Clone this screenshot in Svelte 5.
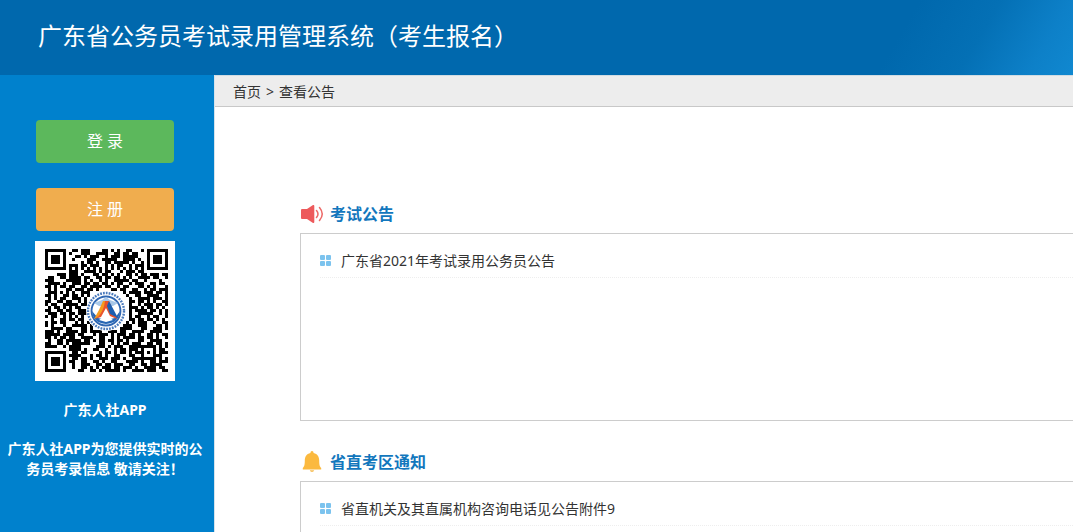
<script>
    const sections = [
        { title: '考试公告', icon: 'horn', items: ['广东省2021年考试录用公务员公告'] },
        { title: '省直考区通知', icon: 'bell', items: ['省直机关及其直属机构咨询电话见公告附件9'] }
    ];

    // one string per row of the code, # is a dark module
    const qrRows = [
        '#######..##.###....##.#.#..##...#.#######',
        '#.....#.#...###..####..##.##.##...#.....#',
        '#.###.#...##.#.###..#.###.#####...#.###.#',
        '#.###.#..#....###..#####..####.#..#.###.#',
        '#.###.#.....#.##.#..##.#####.#..#.#.###.#',
        '#.....#.###.##.###..#.#.##..#.###.#.....#',
        '#######.#.#.#.#.#.#.#.#.#.#.#.#.#.#######',
        '........###..####.#.##...#.###.##........',
        '....###.###.#...##.##.#.#..##.#.##.###.##',
        '.##..##.####.##..##.##.##.#.#..####.##..#',
        '###....#####.#.#..#.#..#####.##..#....#..',
        '.####.#..###.##.##.##.#.##..#.###..##.##.',
        '##.#.##.##..##.####.##..#.##...##.#.#...#',
        '.#.#...##.###.##.#....##.##..##..#.##.###',
        '.###.#.#.#..###...........#.####.###.##.#',
        '##.#..##.##.#.#............#..##..####..#',
        '.#.#.##..###.#..............#..####.###.#',
        '##..##.##..#.#..............##.##.#.#..##',
        '#.##..#####.##..............#..#.###.##.#',
        '.#.##.#.#.##................###.#.##.#.#.',
        '##..##.##..###..............#.####.##.#.#',
        '.###.##.##.###..............#..#####..#.#',
        '#.##..#.#.#.#...............#.##..#.##..#',
        '..#..##.##.##...............##.##.##.#.#.',
        '#.##.##...#.#.#............#.#.###..#..##',
        '#.#...#..#####.#..........###..###...##.#',
        '..####.##...##.#.........####...##..###.#',
        '###.#..####.##.####..###.##..####..####..',
        '#####.####.##...#.###.#.###.##.#..##.#.##',
        '##.#.##.##..####..##..#.#.####.##.##.#..#',
        '.#..##.#####.##.#.##.##.##.#...##..####..',
        '##..##.#.######...##..#.#.##.###..##.##.#',
        '####..#.####.....###.#.###..#########.#.#',
        '........####.#..##..#..#.##.###.#...#.##.',
        '#######..##.##....#.##.#.##.#.###.#.#.###',
        '#.....#.####...#.##.#..##...##..#...###..',
        '#.###.#..##.##.#..###.###.#..########.#.#',
        '#.###.#.##..##..##.#..##...####.#..##.###',
        '#.###.#..#..###..##.##.###..##..##.####..',
        '#.....#..#..##.#.#.###.##.###.#..####.##.',
        '#######....##..##.#.#####.#..####.###..##'
    ];

    const qrPath = qrRows
        .map((row, y) => [...row].map((c, x) => (c === '#' ? `M${x} ${y}h1v1h-1z` : '')).join(''))
        .join('');
</script>

<div class="page">
    <header class="banner">
        <h1>广东省公务员考试录用管理系统（考生报名）</h1>
    </header>

    <div class="body">
        <aside class="sidebar">
            <button class="btn login" type="button">登 录</button>
            <button class="btn register" type="button">注 册</button>

            <svg class="qrcode" viewBox="0 0 140 140" role="img" aria-label="广东人社APP">
                <rect width="140" height="140" fill="#fff" />
                <path transform="translate(10 8) scale(3)" d={qrPath} fill="#000" shape-rendering="crispEdges" />
                <circle cx="71" cy="70" r="20" fill="#fff" />
                <circle cx="71" cy="70" r="18" fill="none" stroke="#4a7abc" stroke-width="2.4" stroke-dasharray="1.8 1.1" />
                <circle cx="71" cy="70" r="14.5" fill="#fff" stroke="#2f67b3" stroke-width="1.8" />
                <path d="M59 62l8-3 4-3 4 3 8 3-5 3-14 0z" fill="#a9c8e8" />
                <path d="M57 70q1 12 14 13q13-1 14-13l-5 7-9 2-8-2z" fill="#2666b4" />
                <path d="M70 60c1 9-3 15-11 18l5-9 4-9z" fill="#f59b1f" />
                <path d="M70 60h4l8 18-7-3-4-8-5 9-6 2c6-4 9-10 10-18z" fill="#e9532d" />
                <path d="M74 60l9 17-8-4-3-8z" fill="#1d5eaf" />
                <path d="M64 79l7-5 7 5-7 2z" fill="#fff" />
            </svg>

            <p>广东人社APP</p>
            <p>广东人社APP为您提供实时的公务员考录信息 敬请关注！</p>
        </aside>

        <main class="content">
            <nav class="crumbs">
                <a href="#home">首页</a>
                <span>&gt;</span>
                <a href="#notice">查看公告</a>
            </nav>

            <div class="notices">
                {#each sections as section}
                    <section>
                        <h2>
                            {#if section.icon === 'horn'}
                                <svg width="24" height="24" viewBox="0 0 24 24">
                                    <path d="M2 7h5l6-4q1.300-.4 1.300 1v16q0 1.400-1.300 1l-6-4H2q-1 0-1-1V8q0-1 1-1z" fill="#ed5a5c" />
                                    <path d="M16.500 8.500q3 3.500 0 7M19.500 5.500q5.500 6.500 0 13" fill="none" stroke="#ed6a68" stroke-width="1.500" stroke-linecap="round" />
                                </svg>
                            {:else}
                                <svg width="24" height="24" viewBox="0 0 24 24">
                                    <path d="M12 1q1.600 0 1.600 2c4 .8 5.600 4 5.600 7.500 0 4.500.6 6 2 7.500v1.500H2.800V18c1.400-1.500 2-3 2-7.500 0-3.500 1.600-6.700 5.600-7.500Q10.400 1 12 1z" fill="#fbb93f" />
                                    <path d="M9.800 20.300h4.400q-.4 1.700-2.200 1.700t-2.200-1.700z" fill="#f6bd55" />
                                </svg>
                            {/if}
                            {section.title}
                        </h2>
                        <ul>
                            {#each section.items as item}
                                <li>
                                    <svg width="11" height="11" viewBox="0 0 11 11" fill="#7cc3ee">
                                        <rect width="5" height="5" rx="1" />
                                        <rect x="6" width="5" height="5" rx="1" />
                                        <rect y="6" width="5" height="5" rx="1" />
                                        <rect x="6" y="6" width="5" height="5" rx="1" />
                                    </svg>
                                    <a href="#detail">{item}</a>
                                </li>
                            {/each}
                        </ul>
                    </section>
                {/each}
            </div>
        </main>
    </div>
</div>

<style>
    :global(body) {
        margin: 0;
    }

    .page {
        display: flex;
        flex-direction: column;
        height: 100vh;
        overflow: hidden;
        font-family: "Noto Sans", "Noto Sans CJK SC", sans-serif;
        font-size: 14px;
        line-height: 20px;
        color: #333;
        background: #fff;
    }

    a {
        color: inherit;
        text-decoration: none;
    }

    .banner {
        flex: none;
        display: flex;
        align-items: center;
        height: 75px;
        padding: 0 38px;
        box-sizing: border-box;
        background: linear-gradient(120deg, #0068ad calc(100% - 170px), #0470b5 calc(100% - 100px), #0d80c8 calc(100% - 40px), #1088d0);
    }

    .banner h1 {
        margin: 0;
        font-size: 24px;
        font-weight: 400;
        line-height: 32px;
        padding-bottom: 4px;
        color: #fff;
        white-space: nowrap;
    }

    .body {
        flex: 1;
        display: flex;
        min-height: 0;
    }

    .sidebar {
        flex: none;
        display: flex;
        flex-direction: column;
        align-items: center;
        width: 214px;
        padding: 45px 4px 0 0;
        box-sizing: border-box;
        background: #0081cd;
        color: #fff;
        font-weight: 700;
        text-align: center;
    }

    .btn {
        width: 138px;
        height: 43px;
        padding: 0 0 3px;
        border: 0;
        border-radius: 4px;
        font-family: inherit;
        font-size: 16px;
        color: #fff;
        cursor: pointer;
    }

    .login {
        margin-bottom: 25px;
        background: #5cb85c;
    }

    .register {
        margin-bottom: 10px;
        background: #f0ad4e;
    }

    .qrcode {
        flex: none;
        width: 140px;
        height: 140px;
    }

    .sidebar p {
        margin: 19px 0 0;
        padding: 0 4px;
    }

    .content {
        flex: 1;
        min-width: 0;
        border-left: 1px solid #d5e3ec;
    }

    .crumbs {
        display: flex;
        align-items: center;
        gap: 5px;
        height: 32px;
        padding: 1px 0 0 18px;
        box-sizing: border-box;
        border-top: 1px solid #d0dce3;
        border-bottom: 1px solid #c8c8c8;
        background: #ededed;
    }

    .notices {
        padding: 77px 0 0 85px;
    }

    h2 {
        display: flex;
        align-items: center;
        gap: 6px;
        height: 60px;
        margin: 0;
        font-size: 16px;
        font-weight: 700;
        line-height: 24px;
        color: #1277bd;
    }

    ul {
        height: 188px;
        margin: -11px 0 11px;
        padding: 10px 0 0 19px;
        box-sizing: border-box;
        border: 1px solid #ccc;
        border-right: 0;
        list-style: none;
    }

    li {
        display: flex;
        align-items: center;
        gap: 10px;
        height: 33px;
        border-bottom: 1px dotted #eee;
    }
</style>
